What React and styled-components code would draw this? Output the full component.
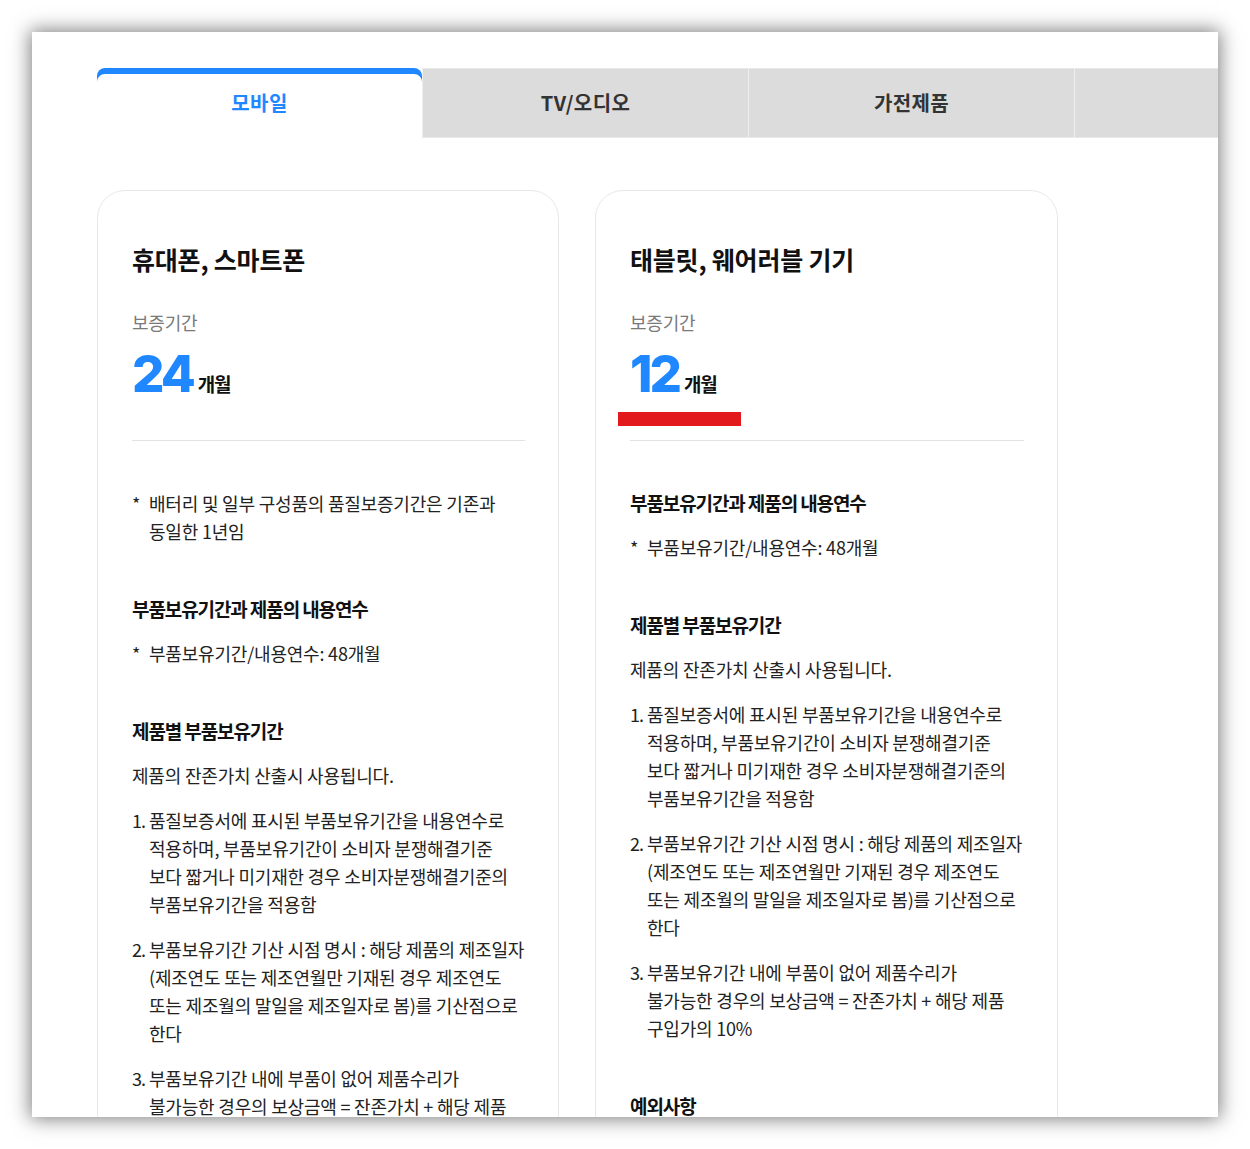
import React from 'react';
import styled, { createGlobalStyle } from 'styled-components';

const GlobalStyle = createGlobalStyle`
  html, body {
    margin: 0;
    padding: 0;
    background: #fff;
  }
  body {
    font-family: "Noto Sans CJK KR", "Noto Sans", sans-serif;
    color: #222;
  }
`;

const Page = styled.div`
  padding: 32px;
`;

const Frame = styled.div`
  height: 1085px;
  box-sizing: border-box;
  background: #fff;
  box-shadow: 0 0 18px 2px rgba(0, 0, 0, 0.5);
  overflow: hidden;
  padding: 36px 0 0 65px;
`;

const TabBar = styled.div`
  display: flex;
  height: 70px;
`;

const Tab = styled.div`
  flex: 0 0 ${props => props.$active ? '325px' : '326px'};
  box-sizing: border-box;
  display: flex;
  align-items: center;
  justify-content: center;
  padding-bottom: 2px;
  font-size: 20px;
  font-weight: 700;
  letter-spacing: 0.4px;
  background: ${props => props.$active ? '#fff' : '#dcdcdc'};
  color: ${props => props.$active ? '#1f87ff' : '#333'};
  border-radius: ${props => props.$active ? '8px 8px 0 0' : '0'};
  box-shadow: ${props => props.$active ? 'inset 0 6px 0 #1f87ff' : 'none'};
  border-left: ${props => props.$active ? 'none' : '1px solid #efefef'};
  border-top: ${props => props.$active ? 'none' : '1px solid #e9e9e9'};
  border-bottom: ${props => props.$active ? 'none' : '1px solid #e9e9e9'};
`;

const Cards = styled.div`
  display: grid;
  grid-template-columns: 462px 463px;
  gap: 36px;
  margin-top: 52px;
`;

const Card = styled.div`
  position: relative;
  border: 1px solid #e8e8e8;
  border-radius: 28px;
  padding: 51px 33px 80px 34px;
`;

const Title = styled.h2`
  margin: 0;
  font-size: 25px;
  line-height: 34px;
  font-weight: 700;
  letter-spacing: -0.2px;
  color: #111;
`;

const Label = styled.div`
  margin-top: 32px;
  font-size: 18px;
  line-height: 28px;
  letter-spacing: -0.2px;
  color: #7a7a7a;
`;

const Amount = styled.div`
  display: flex;
  align-items: baseline;
  gap: 5px;
  margin-top: 12px;
  height: 52px;
`;

const Number = styled.span`
  font-family: Inter, "Noto Sans", sans-serif;
  font-size: 51px;
  line-height: 52px;
  font-weight: 800;
  letter-spacing: -3px;
  color: #1f87ff;
`;

const Unit = styled.span`
  font-size: 19px;
  font-weight: 700;
  letter-spacing: -1.3px;
  color: #111;
`;

const Mark = styled.div`
  position: absolute;
  top: 221px;
  left: 22px;
  width: 123px;
  height: 14px;
  background: #e31a1c;
`;

const Divider = styled.div`
  margin-top: 40px;
  height: 1px;
  background: #e3e3e3;
`;

const Section = styled.section`
  margin-top: ${props => props.$first ? '48px' : '50px'};
`;

const Heading = styled.h3`
  margin: 0 0 16px;
  font-size: 19px;
  line-height: 28px;
  font-weight: 700;
  letter-spacing: -1.1px;
  color: #111;
`;

const Text = styled.p`
  margin: 0;
  font-size: 18px;
  line-height: 28px;
  letter-spacing: -0.2px;
  color: #222;
  white-space: nowrap;
`;

const Note = styled(Text)`
  padding-left: 17px;
  text-indent: -17px;
`;

const List = styled.ol`
  list-style: none;
  margin: 17px 0 0;
  padding: 0;
  display: flex;
  flex-direction: column;
  gap: 17px;
`;

const Item = styled.li`
  font-size: 18px;
  line-height: 28px;
  letter-spacing: -0.2px;
  color: #222;
  white-space: nowrap;
  padding-left: 17px;
  text-indent: -17px;
`;

const Marker = styled.span`
  display: inline-block;
  width: 17px;
  text-indent: 0;
  letter-spacing: -1px;
`;

const tabs = ['모바일', 'TV/오디오', '가전제품', ''];

const partsList = [
  ['품질보증서에 표시된 부품보유기간을 내용연수로', '적용하며, 부품보유기간이 소비자 분쟁해결기준', '보다 짧거나 미기재한 경우 소비자분쟁해결기준의', '부품보유기간을 적용함'],
  ['부품보유기간 기산 시점 명시 : 해당 제품의 제조일자', '(제조연도 또는 제조연월만 기재된 경우 제조연도', '또는 제조월의 말일을 제조일자로 봄)를 기산점으로', '한다'],
  ['부품보유기간 내에 부품이 없어 제품수리가', '불가능한 경우의 보상금액 = 잔존가치 + 해당 제품', '구입가의 10%'],
];

const Lines = ({ lines }) => lines.map((line, i) => (
  <React.Fragment key={i}>
    {i > 0 && <br />}
    {line}
  </React.Fragment>
));

const ProductCard = ({ title, months, note, marked }) => (
  <Card>
    <Title>{title}</Title>
    <Label>보증기간</Label>
    <Amount>
      <Number>{months}</Number>
      <Unit>개월</Unit>
    </Amount>
    {marked && <Mark />}
    <Divider />
    {note && (
      <Section $first>
        <Note><Marker>*</Marker><Lines lines={note} /></Note>
      </Section>
    )}
    <Section $first={!note}>
      <Heading>부품보유기간과 제품의 내용연수</Heading>
      <Note><Marker>*</Marker>부품보유기간/내용연수: 48개월</Note>
    </Section>
    <Section>
      <Heading>제품별 부품보유기간</Heading>
      <Text>제품의 잔존가치 산출시 사용됩니다.</Text>
      <List>
        {partsList.map((lines, i) => (
          <Item key={i}><Marker>{i + 1}.</Marker><Lines lines={lines} /></Item>
        ))}
      </List>
    </Section>
    <Section>
      <Heading>예외사항</Heading>
      <Note><Marker>*</Marker>소비자 과실로 인한 고장은 유상 수리</Note>
    </Section>
  </Card>
);

export default function App() {
  return (
    <Page>
      <GlobalStyle />
      <Frame>
        <TabBar>
          {tabs.map((t, i) => (
            <Tab key={i} $active={i === 0}>{t}</Tab>
          ))}
        </TabBar>
        <Cards>
          <ProductCard
            title="휴대폰, 스마트폰"
            months="24"
            note={['배터리 및 일부 구성품의 품질보증기간은 기존과', '동일한 1년임']}
          />
          <ProductCard title="태블릿, 웨어러블 기기" months="12" marked />
        </Cards>
      </Frame>
    </Page>
  );
}
